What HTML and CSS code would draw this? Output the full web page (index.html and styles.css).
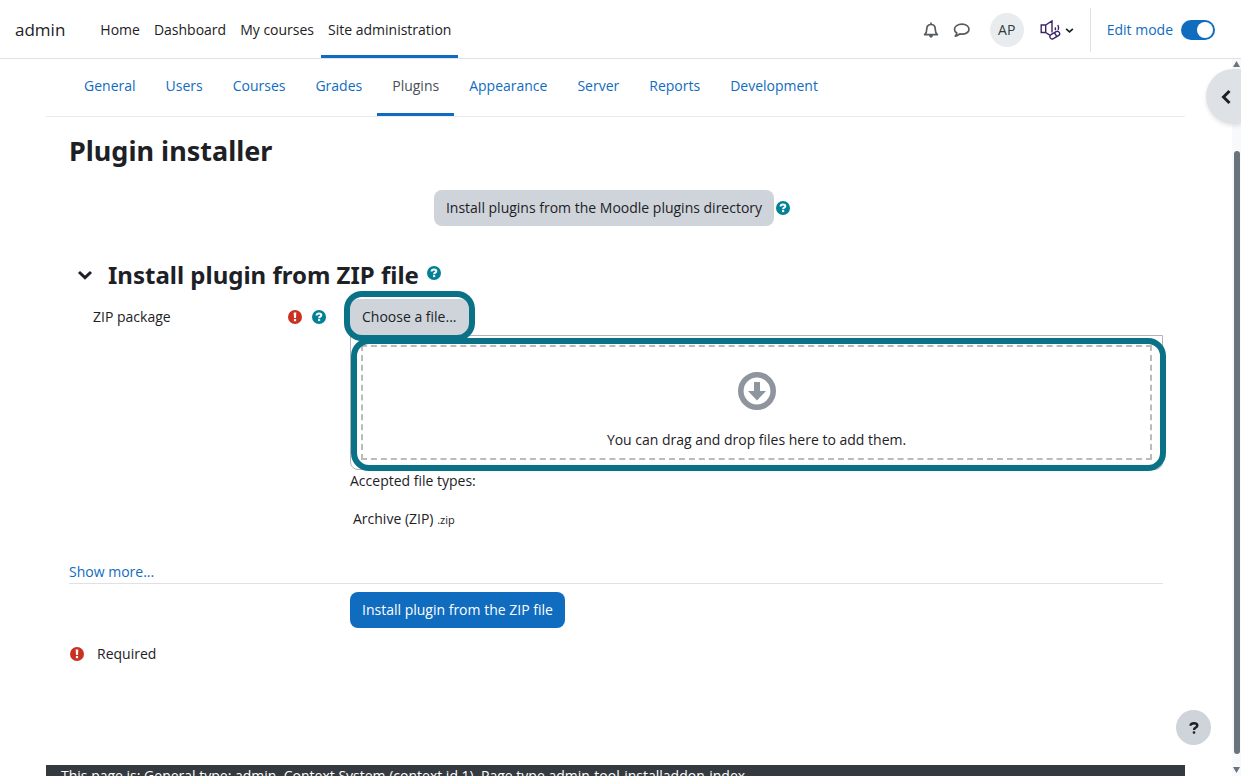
FILE: index.html
```html
<!DOCTYPE html>
<html lang="en">
<head>
<meta charset="utf-8">
<title>Plugin installer</title>
<link rel="stylesheet" href="styles.css">
</head>
<body>
<svg class="defs" aria-hidden="true">
  <symbol id="help" viewBox="0 0 14 14">
    <circle cx="7" cy="7" r="7" fill="#008196"/>
    <path d="M4.600 5.500C4.700 4.100 5.700 3.600 7 3.600s2.300.6 2.300 1.700c0 1.500-2.200 1.300-2.200 2.900" fill="none" stroke="#fff" stroke-width="2"/>
    <rect x="6" y="9.100" width="2.200" height="2" fill="#fff"/>
  </symbol>
  <symbol id="required" viewBox="0 0 14 14">
    <circle cx="7" cy="7" r="7" fill="#ca3120"/>
    <path d="M5.700 2.500h2.600L8 8H6z" fill="#fff"/>
    <rect x="5.900" y="9" width="2.200" height="2.200" fill="#fff"/>
  </symbol>
  <symbol id="chevron" viewBox="0 0 16 10">
    <path d="M2 2l6 5.600L14 2" fill="none" stroke="#1d2125" stroke-width="3"/>
  </symbol>
</svg>
<header class="navbar">
  <a class="brand" href="#">admin</a>
  <nav class="primary">
    <a href="#">Home</a>
    <a href="#">Dashboard</a>
    <a href="#">My courses</a>
    <a class="active" href="#">Site administration</a>
  </nav>
  <div class="tools">
    <button class="tool bell" aria-label="Notifications">
      <svg width="16" height="17" viewBox="0 0 16 17" fill="none" stroke="#555b61" stroke-width="1.700"><path d="M8 .5v2M1.600 12.700c1.700-1.500 2.200-3.300 2.200-6C3.800 4 5.500 2.500 8 2.500s4.200 1.500 4.200 4.200c0 2.700.5 4.500 2.200 6z" stroke-linejoin="round"/><path d="M6.500 13.500c0 2.300 3 2.300 3 0z" fill="#555b61" stroke-width="1"/></svg>
    </button>
    <button class="tool chat" aria-label="Messages">
      <svg width="17" height="15" viewBox="0 0 17 15" fill="none" stroke="#555b61" stroke-width="1.700"><path d="M9 1.200c4 0 7 2.200 7 5s-3 5-7 5c-.8 0-1.500-.1-2.200-.3-1.300 1.200-2.700 2-4.500 2.200.9-1 1.400-1.900 1.500-3.100C2.300 9 1.500 7.700 1.500 6.200c0-2.800 3.300-5 7.500-5z" stroke-linejoin="round"/></svg>
    </button>
    <button class="avatar">AP</button>
    <button class="tool reader" aria-label="Reader settings">
      <svg width="22" height="20" viewBox="0 0 22 20" fill="none" stroke="#3b2465" stroke-width="1.400"><path d="M1.200 5h4.500v7.500H1.200zM5.700 5L12 .9v11.600M5.700 12.500l4 2.600M15 7.500c.6.900.6 1.700.2 2.600M17.800 5c1 1.800 1 3.300.2 4.800"/><rect x="9.500" y="12.800" width="10.500" height="4.600" rx="2.300" transform="rotate(-30 14.750 15.100)"/><path d="M14.600 12.900l2.200 3.700"/></svg>
      <svg width="9" height="7" viewBox="0 0 16 10"><use href="#chevron"/></svg>
    </button>
    <label class="edit"><span>Edit mode</span><input type="checkbox" role="switch" checked></label>
  </div>
</header>
<div class="viewport">
  <div class="page">
    <nav class="secondary">
      <a href="#">General</a>
      <a href="#">Users</a>
      <a href="#">Courses</a>
      <a href="#">Grades</a>
      <a class="active" href="#">Plugins</a>
      <a href="#">Appearance</a>
      <a href="#">Server</a>
      <a href="#">Reports</a>
      <a href="#">Development</a>
    </nav>
    <main class="content">
      <h1>Plugin installer</h1>
      <div class="directory">
        <button class="btn">Install plugins from the Moodle plugins directory</button>
        <svg class="icon"><use href="#help"/></svg>
      </div>
      <form>
        <div class="section-head">
          <button type="button" class="toggle" aria-label="Collapse"><svg width="16" height="10"><use href="#chevron"/></svg></button>
          <h2>Install plugin from ZIP file</h2>
          <svg class="icon"><use href="#help"/></svg>
        </div>
        <div class="row">
          <div class="label">
            <label for="zip">ZIP package</label>
            <svg class="icon"><use href="#required"/></svg>
            <svg class="icon"><use href="#help"/></svg>
          </div>
          <div class="field">
            <div class="choose"><button type="button" class="btn" id="zip">Choose a file...</button></div>
            <div class="filebox">
              <div class="drop">
                <svg width="40" height="40" viewBox="0 0 40 40"><circle cx="20" cy="20" r="16.200" fill="none" stroke="#8f959e" stroke-width="5.600"/><path d="M17 11h6v9h6l-9 9.500-9-9.500h6z" fill="#8f959e"/></svg>
                <span>You can drag and drop files here to add them.</span>
              </div>
            </div>
            <p>Accepted file types:</p>
            <ul><li>Archive (ZIP) <small>.zip</small></li></ul>
          </div>
        </div>
        <div class="more"><a href="#">Show more...</a></div>
        <div class="row actions"><button class="btn submit">Install plugin from the ZIP file</button></div>
        <div class="required"><svg class="icon"><use href="#required"/></svg><span>Required</span></div>
      </form>
    </main>
    <footer>This page is: General type: admin. Context System (context id 1). Page type admin-tool-installaddon-index.</footer>
  </div>
  <div class="scrollbar" aria-hidden="true">
    <svg width="7" height="6"><path d="M0 6L3.500 0 7 6z" fill="#6a737b"/></svg>
    <div class="thumb"></div>
    <svg width="7" height="6"><path d="M0 0h7L3.500 6z" fill="#6a737b"/></svg>
  </div>
  <button class="drawer" aria-label="Open block drawer"><svg width="10" height="16" viewBox="0 0 10 16"><path d="M8.500 2l-6 6 6 6" fill="none" stroke="#1d2125" stroke-width="3"/></svg></button>
  <button class="footer-help" aria-label="Help"><svg width="10" height="12" viewBox="0 0 10 12"><path d="M1.500 3.800C1.500 2 3 1.300 5 1.300s3.300.8 3.300 2.400C8.300 5.700 5 5.500 5 8" fill="none" stroke="#1d2125" stroke-width="2.400"/><rect x="3.700" y="9.200" width="2.600" height="2.600" rx="1" fill="#1d2125"/></svg></button>
</div>
</body>
</html>
```
FILE: styles.css
```css
* { box-sizing: border-box; }
body {
  margin: 0;
  height: 100vh;
  display: flex;
  flex-direction: column;
  overflow: hidden;
  background: #fff;
  color: #1d2125;
  font: 14px/22px "Open Sans", "Noto Sans", sans-serif;
}
a { color: #0f6cbf; text-decoration: none; }
button { font: inherit; color: inherit; border: 0; padding: 0; background: none; cursor: pointer; }
h1, h2, p, ul { margin: 0; padding: 0; }
.defs { position: absolute; width: 0; height: 0; }
.icon { width: 14px; height: 14px; flex: none; }

.navbar {
  display: flex;
  height: 59px;
  flex: none;
  padding: 0 26px 0 15px;
  border-bottom: 1px solid #dee2e6;
}
.brand { align-self: center; margin-right: 28px; padding-top: 2px; color: #1d2125; font-size: 17px; }
.primary { display: flex; }
.primary a {
  display: flex;
  align-items: center;
  padding: 4px 7px 0;
  border-bottom: 3px solid transparent;
  color: #1d2125;
}
.primary .active { border-color: #0f6cbf; }
.tools { display: flex; align-items: center; margin-left: auto; padding-top: 2px; }
.tool { display: flex; align-items: center; }
.bell { margin-right: 14px; }
.chat { margin-right: 20px; }
.avatar { width: 34px; height: 34px; border-radius: 50%; background: #e9ecef; color: #343a40; }
.reader { gap: 3px; margin: 0 16px; }
.edit {
  display: flex;
  align-items: center;
  gap: 8px;
  height: 44px;
  padding-left: 16px;
  border-left: 1px solid #dee2e6;
  color: #0f6cbf;
}
.edit input {
  appearance: none;
  width: 34px;
  height: 20px;
  margin: 0;
  padding: 2px;
  border-radius: 10px;
  background: #0f6cbf;
}
.edit input::before {
  content: "";
  display: block;
  width: 16px;
  height: 16px;
  margin-left: auto;
  border-radius: 50%;
  background: #fff;
}

.viewport { position: relative; display: flex; flex: 1; min-height: 0; }
.page { flex: 1; margin: 0 47px 0 46px; }
.secondary { display: flex; height: 58px; padding-left: 23px; border-bottom: 1px solid #e9ecef; }
.secondary a { display: flex; align-items: center; padding: 0 15px; border-bottom: 3px solid transparent; }
.secondary .active { border-color: #0f6cbf; color: #495057; }
.content { padding: 15px 22px 100px 23px; }
h1, h2 { font-family: "Noto Sans", "Open Sans", sans-serif; font-weight: 700; line-height: 38px; }
h1 { font-size: 27px; }
h2 { font-size: 24px; }
.directory { display: flex; justify-content: center; align-items: center; gap: 2px; margin: 20px 0 30px; padding-right: 8px; }
.btn { height: 36px; padding: 0 12px; border-radius: 8px; background: #ced4da; white-space: nowrap; }
.section-head { display: flex; align-items: center; gap: 8px; padding-left: 8px; }
.section-head .icon { margin-bottom: 4px; }
.toggle { display: flex; margin-right: 7px; }
.row { display: grid; grid-template-columns: 257px 1fr; column-gap: 24px; }
.label { display: flex; align-items: center; gap: 10px; height: 36px; margin-top: 5px; padding-left: 24px; }
.label label { margin-right: auto; }
.choose { position: relative; z-index: 1; width: max-content; margin-top: 5px; }
.choose .btn { display: block; }
.choose::after, .filebox::after {
  content: "";
  position: absolute;
  border: 6px solid #0a7287;
  border-radius: 18px;
  pointer-events: none;
}
.choose::after { inset: -8px -6px -6px -6px; }
.filebox { position: relative; padding: 9px 10px; border: 1px solid #b0b4b8; border-radius: 0 0 8px 8px; }
.filebox::after { inset: 2px -4px -2px 0; }
.drop {
  display: flex;
  flex-direction: column;
  align-items: center;
  gap: 18px;
  padding: 24px 0 7px;
  border: 2px dashed #bbb;
}
ul { margin-top: 16px; padding-left: 3px; list-style: none; }
small { font-size: 11px; }
.more { margin-top: 30px; border-bottom: 1px solid #dee2e6; }
.actions { padding-top: 8px; }
.submit { grid-column: 2; justify-self: start; background: #0f6cbf; color: #fff; }
.required { display: flex; align-items: center; gap: 13px; margin-top: 15px; padding-left: 1px; }
footer { padding: 0 15px; background: #343a40; color: #fff; }

.scrollbar {
  display: flex;
  flex-direction: column;
  align-items: center;
  width: 9px;
  padding: 2px 0 3px;
  background: #f8f9fa;
}
.thumb { flex: 1; width: 6px; margin: 84px 0 13px; border-radius: 3px; background: #6a737b; }
.drawer {
  position: absolute;
  top: 10px;
  right: 0;
  width: 35px;
  height: 55px;
  padding-left: 15px;
  border-radius: 28px 0 0 28px;
  background: #dee2e6;
  box-shadow: 0 2px 4px rgba(0, 0, 0, .1);
}
.drawer svg, .footer-help svg { display: block; }
.footer-help {
  position: absolute;
  right: 30px;
  bottom: 31px;
  display: grid;
  place-items: center;
  width: 35px;
  height: 35px;
  border-radius: 50%;
  background: #ced4da;
}
```
